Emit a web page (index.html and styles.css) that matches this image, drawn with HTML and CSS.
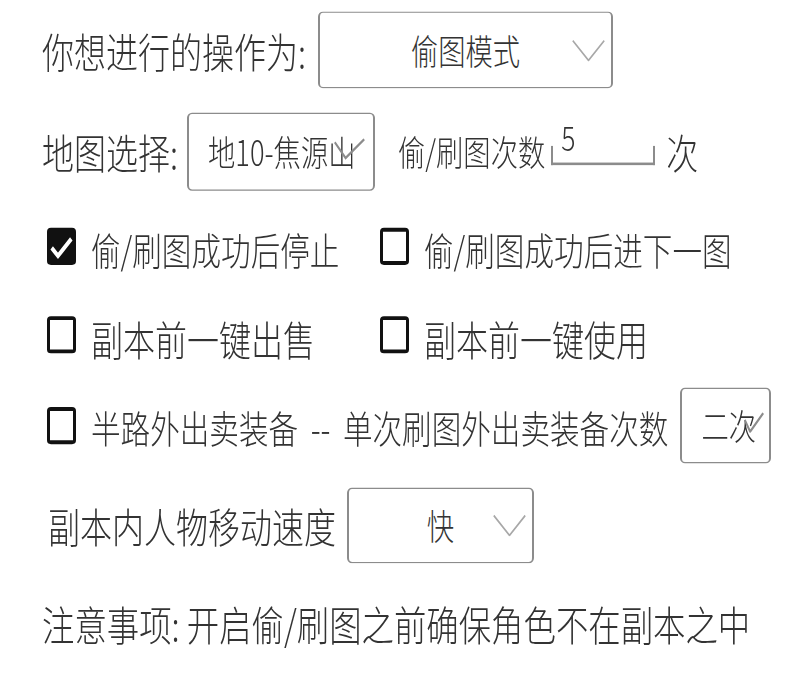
FILE: index.html
```html
<!DOCTYPE html>
<html>
<head>
  <title>偷图设置</title>
  <link rel="stylesheet" href="styles.css">
</head>
<body>
  <div class="screen">
    <div class="row row-mode">
      <span class="label">你想进行的操作为:</span>
      <div class="select select-mode">
        <span class="select-text">偷图模式</span>
        <svg class="arrow" width="33" height="17" viewBox="0 0 42 22" preserveAspectRatio="none"><polyline points="1,1 21,21 41,1"/></svg>
      </div>
    </div>

    <div class="row row-map">
      <span class="label">地图选择:</span>
      <div class="select select-map">
        <span class="select-text">地10-焦源山</span>
        <svg class="tick tick-map" width="31" height="17" viewBox="0 0 40 22" preserveAspectRatio="none"><polyline points="1,4 15,20 39,1"/></svg>
      </div>
      <span class="label small times-label">偷/刷图次数</span>
      <span class="count"><span class="count-value">5</span></span>
      <span class="label times-unit">次</span>
    </div>

    <div class="row row-check">
      <div class="check-item">
        <span class="box checked">
          <svg width="29" height="29" viewBox="0 0 37 37" preserveAspectRatio="none"><polyline points="6,20 14,28 31,11"/></svg>
        </span>
        <span class="check-label">偷/刷图成功后停止</span>
      </div>
      <div class="check-item">
        <span class="box"></span>
        <span class="check-label">偷/刷图成功后进下一图</span>
      </div>
    </div>

    <div class="row row-check row-sell">
      <div class="check-item">
        <span class="box"></span>
        <span class="check-label large">副本前一键出售</span>
      </div>
      <div class="check-item">
        <span class="box"></span>
        <span class="check-label large">副本前一键使用</span>
      </div>
    </div>

    <div class="row row-half">
      <span class="box"></span>
      <span class="check-label">半路外出卖装备<span class="dash">--</span>单次刷图外出卖装备次数</span>
      <div class="select select-times">
        <span class="select-text">二次</span>
        <svg class="tick tick-times" width="20" height="16" viewBox="0 0 26 21" preserveAspectRatio="none"><polyline points="1,8 8,20 25,1"/></svg>
      </div>
    </div>

    <div class="row row-speed">
      <span class="label">副本内人物移动速度</span>
      <div class="select select-speed">
        <span class="select-text">快</span>
        <svg class="arrow" width="33" height="17" viewBox="0 0 42 22" preserveAspectRatio="none"><polyline points="1,1 21,21 41,1"/></svg>
      </div>
    </div>

    <div class="row row-note">
      <span class="label">注意事项: 开启偷/刷图之前确保角色不在副本之中</span>
    </div>
  </div>
</body>
</html>
```

FILE: styles.css
```css
body {
  margin: 0;
  padding: 0;
  min-height: 698px;
  background-color: #fff;
  font-family: "Noto Sans CJK SC", "Noto Sans", sans-serif;
  font-weight: 300;
  color: #333;
}

/* the app screen is drawn stretched tall, so stretch the whole page */
.screen {
  height: 545px;
  transform: scaleY(1.28);
  transform-origin: 0 0;
}

.row {
  display: flex;
  align-items: center;
  padding-left: 42px;
}

.label {
  font-size: 32px;
  line-height: 1.2;
  white-space: nowrap;
}

.label.small {
  font-size: 27.3px;
}

/* dropdowns */
.select {
  position: relative;
  display: flex;
  align-items: center;
  box-sizing: border-box;
  border: 2px solid #8c8c8c;
  border-top-width: 1.6px;
  border-bottom-width: 1.6px;
  border-radius: 5px / 4px;
  background-color: #fff;
}

.select-text {
  font-size: 27.3px;
  line-height: 1.2;
  white-space: nowrap;
}

.select polyline {
  fill: none;
  stroke: #a8a8a8;
  stroke-width: 2;
}

.arrow {
  position: absolute;
  right: 6px;
  top: 50%;
  margin-top: -8px;
}

.tick {
  position: absolute;
}

.tick polyline {
  stroke: #8c8c8c;
  stroke-width: 2.5;
}

/* row 1 */
.row-mode {
  height: 78px;
}

.select-mode {
  width: 295px;
  height: 60px;
  margin-left: 12px;
  justify-content: center;
}

/* row 2 */
.row-map {
  height: 80px;
}

.select-map {
  width: 188px;
  height: 61px;
  margin-left: 9px;
  padding-left: 19px;
  overflow: hidden;
}

.tick-map {
  right: 8px;
  top: 19px;
}

.times-label {
  margin-left: 23px;
}

.count {
  display: flex;
  align-items: flex-end;
  box-sizing: border-box;
  width: 104px;
  height: 15px;
  margin-left: 6px;
  margin-top: 6px;
  border: 2px solid #8c8c8c;
  border-top: none;
}

.count-value {
  font-size: 26.5px;
  line-height: 1;
  margin: 0 0 6px 8px;
}

.times-unit {
  margin-left: 11px;
}

/* checkbox rows */
.row-check {
  display: grid;
  grid-template-columns: 333px auto;
  align-items: center;
  height: 69px;
  padding-left: 47px;
}

.row-sell {
  height: 70px;
}

.check-item {
  display: flex;
  align-items: center;
}

.box {
  display: block;
  flex-shrink: 0;
  box-sizing: border-box;
  width: 29px;
  height: 29px;
  border: 3.5px solid #111;
  border-radius: 4px / 3px;
}

.box.checked {
  background-color: #111;
  border: none;
}

.box svg {
  display: block;
}

.box polyline {
  fill: none;
  stroke: #fff;
  stroke-width: 4.5;
}

.check-label {
  margin-left: 15px;
  font-size: 29.6px;
  line-height: 1.2;
  white-space: nowrap;
  position: relative;
  top: 2px;
}

.check-label.large {
  font-size: 32px;
}

.dash {
  padding: 0 12.5px;
}

/* row 5 */
.row-half {
  height: 70px;
  padding-left: 47px;
}

.select-times {
  width: 91px;
  height: 59px;
  margin-left: 12px;
  padding-left: 19px;
  overflow: hidden;
}

.tick-times {
  right: 5px;
  top: 18px;
}

/* row 6 */
.row-speed {
  height: 86px;
  padding-left: 48px;
}

.select-speed {
  width: 187px;
  height: 59px;
  margin-left: 11px;
  justify-content: center;
}

/* note */
.row-note {
  height: 69px;
}

.row-note .label {
  font-size: 32.4px;
}
```
